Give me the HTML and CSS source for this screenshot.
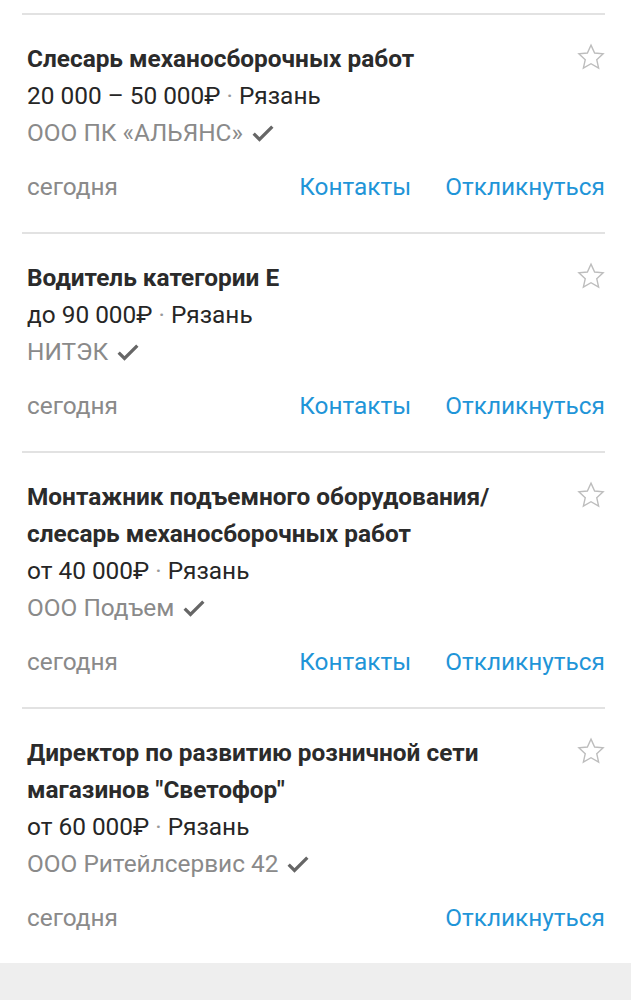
FILE: index.html
```html
<!DOCTYPE html>
<html lang="ru">
<head>
<meta charset="utf-8">
<link rel="stylesheet" href="styles.css">
</head>
<body>
<div class="list">
  <div class="vacancy">
    <div class="head">
      <div class="title">Слесарь механосборочных работ</div>
      <svg class="star" viewBox="0 0 24 24"><path d="M12 2.5l2.9 6.3 6.8.7-5.1 4.6 1.5 6.8L12 17.4l-6.1 3.5 1.5-6.8-5.1-4.6 6.8-.7z"/></svg>
    </div>
    <div class="salary">20 000 – 50 000₽ <span class="dot">·</span> Рязань</div>
    <div class="company">ООО ПК «АЛЬЯНС» <svg class="check" viewBox="0 0 24 24"><path d="M4 12.5l5 5L20 6.5"/></svg></div>
    <div class="foot">
      <span class="date">сегодня</span>
      <a class="link">Контакты</a>
      <a class="link">Откликнуться</a>
    </div>
  </div>
  <div class="vacancy">
    <div class="head">
      <div class="title">Водитель категории Е</div>
      <svg class="star" viewBox="0 0 24 24"><path d="M12 2.5l2.9 6.3 6.8.7-5.1 4.6 1.5 6.8L12 17.4l-6.1 3.5 1.5-6.8-5.1-4.6 6.8-.7z"/></svg>
    </div>
    <div class="salary">до 90 000₽ <span class="dot">·</span> Рязань</div>
    <div class="company">НИТЭК <svg class="check" viewBox="0 0 24 24"><path d="M4 12.5l5 5L20 6.5"/></svg></div>
    <div class="foot">
      <span class="date">сегодня</span>
      <a class="link">Контакты</a>
      <a class="link">Откликнуться</a>
    </div>
  </div>
  <div class="vacancy">
    <div class="head">
      <div class="title">Монтажник подъемного оборудования/ слесарь механосборочных работ</div>
      <svg class="star" viewBox="0 0 24 24"><path d="M12 2.5l2.9 6.3 6.8.7-5.1 4.6 1.5 6.8L12 17.4l-6.1 3.5 1.5-6.8-5.1-4.6 6.8-.7z"/></svg>
    </div>
    <div class="salary">от 40 000₽ <span class="dot">·</span> Рязань</div>
    <div class="company">ООО Подъем <svg class="check" viewBox="0 0 24 24"><path d="M4 12.5l5 5L20 6.5"/></svg></div>
    <div class="foot">
      <span class="date">сегодня</span>
      <a class="link">Контакты</a>
      <a class="link">Откликнуться</a>
    </div>
  </div>
  <div class="vacancy">
    <div class="head">
      <div class="title">Директор по развитию розничной сети магазинов "Светофор"</div>
      <svg class="star" viewBox="0 0 24 24"><path d="M12 2.5l2.9 6.3 6.8.7-5.1 4.6 1.5 6.8L12 17.4l-6.1 3.5 1.5-6.8-5.1-4.6 6.8-.7z"/></svg>
    </div>
    <div class="salary">от 60 000₽ <span class="dot">·</span> Рязань</div>
    <div class="company">ООО Ритейлсервис 42 <svg class="check" viewBox="0 0 24 24"><path d="M4 12.5l5 5L20 6.5"/></svg></div>
    <div class="foot">
      <span class="date">сегодня</span>
      <a class="link">Откликнуться</a>
    </div>
  </div>
</div>
<div class="bottom"></div>
</body>
</html>
```

FILE: styles.css
```css
body { margin:0; background:white; font:24.4px Roboto, "Noto Sans", sans-serif; color:#262626; }
.list { padding:13px 26px 0 22px; }
.vacancy { border-top:2px solid #e2e2e2; padding:25px 0 27px 5px; line-height:37px; }
.head { display:flex; align-items:flex-start; gap:20px; }
.title { flex:1; font-weight:bold; color:#2b2b2b; }
.star { width:30px; height:30px; margin-top:2px; margin-right:-1px; fill:none; stroke:#bdbdbd; stroke-width:1.1; stroke-linejoin:miter; }
.dot { color:#999; }
.company { color:#8a8a8a; display:flex; align-items:center; gap:6px; }
.check { width:28px; height:28px; fill:none; stroke:#666; stroke-width:2.8; }
.foot { display:flex; margin-top:17px; gap:34px; }
.date { color:#8a8a8a; flex:1; }
.link { color:#1f95d8; cursor:pointer; }
.bottom { background:#eeeeee; height:60px; }
```
